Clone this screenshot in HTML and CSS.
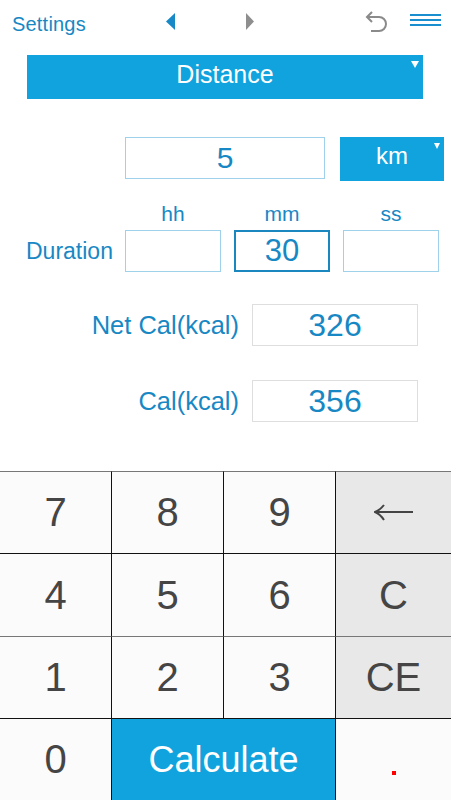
FILE: index.html
```html
<!DOCTYPE html>
<html>
<head>
<meta charset="utf-8">
<link rel="stylesheet" href="styles.css">
</head>
<body>
<div class="app">
  <div class="header">
    <span class="settings">Settings</span>
    <svg class="arrow-left" width="9" height="17" viewBox="0 0 9 17"><polygon points="9,0 9,17 0,8.5" fill="#1789c6"/></svg>
    <svg class="arrow-right" width="8" height="17" viewBox="0 0 8 17"><polygon points="0,0 0,17 8,8.5" fill="#8e8e8e"/></svg>
    <svg class="undo" width="26" height="24" viewBox="0 0 26 24"><path d="M3 7 H15 A7 7 0 0 1 15 21 H7" fill="none" stroke="#8a8a8a" stroke-width="2"/><path d="M8 2 L3 7 L8 12" fill="none" stroke="#8a8a8a" stroke-width="2"/></svg>
    <svg class="menu" width="31" height="14" viewBox="0 0 31 14"><rect x="0" y="1" width="31" height="2" fill="#1a8fcf"/><rect x="0" y="6" width="31" height="2" fill="#1a8fcf"/><rect x="0" y="11" width="31" height="2" fill="#1a8fcf"/></svg>
  </div>

  <div class="mode-bar">Distance<span class="tri"></span></div>

  <div class="dist-row">
    <div class="field dist-field">5</div>
    <div class="unit">km<span class="tri small"></span></div>
  </div>

  <div class="dur-grid">
    <span></span>
    <span class="unit-label">hh</span>
    <span class="unit-label">mm</span>
    <span class="unit-label">ss</span>
    <span class="dur-label">Duration</span>
    <div class="field dur-field"></div>
    <div class="field dur-field active">30</div>
    <div class="field dur-field"></div>
  </div>

  <div class="result-row first">
    <span class="result-label">Net Cal(kcal)</span>
    <div class="result-field">326</div>
  </div>
  <div class="result-row">
    <span class="result-label">Cal(kcal)</span>
    <div class="result-field">356</div>
  </div>

  <div class="keypad">
    <div class="key r1 c1">7</div>
    <div class="key r1">8</div>
    <div class="key r1">9</div>
    <div class="key r1 side"><svg width="40" height="18" viewBox="0 0 40 18"><path d="M1 8 H39" stroke="#444" stroke-width="2"/><path d="M10 1 Q6 6 1 8 Q6 10 10 16" fill="none" stroke="#444" stroke-width="2"/></svg></div>
    <div class="key c1">4</div>
    <div class="key">5</div>
    <div class="key">6</div>
    <div class="key side">C</div>
    <div class="key r3 c1">1</div>
    <div class="key r3">2</div>
    <div class="key r3">3</div>
    <div class="key r3 side">CE</div>
    <div class="key c1">0</div>
    <div class="key calc">Calculate</div>
    <div class="key dot-key"><span class="dot"></span></div>
  </div>
</div>
</body>
</html>
```

FILE: styles.css
```css
* { box-sizing: border-box; }
html, body { margin: 0; padding: 0; background: #fff; }
body { font-family: "Liberation Sans", Arial, sans-serif; color: #1788c4; }
.app { width: 451px; height: 800px; display: flex; flex-direction: column; overflow: hidden; }

.header { height: 44px; display: flex; align-items: flex-start; }
.settings { width: 166px; padding-left: 12px; margin-top: 12px; font-size: 20px; line-height: 24px; color: #1788c4; letter-spacing: 0.2px; }
.arrow-left { margin-top: 13px; }
.arrow-right { margin-top: 13px; margin-left: 71px; }
.undo { margin-top: 10px; margin-left: 110px; }
.menu { margin-top: 13px; margin-left: 20px; }

.mode-bar { position: relative; margin: 11px 0 0 27px; width: 396px; height: 44px; background: #10a3de; color: #fff; font-size: 25px; display: flex; align-items: center; justify-content: center; padding-bottom: 5px; }
.tri { position: absolute; right: 4px; top: 6px; width: 0; height: 0; border-left: 4px solid transparent; border-right: 4px solid transparent; border-top: 7px solid #fff; }
.tri.small { top: 6px; border-left-width: 3.5px; border-right-width: 3.5px; border-top-width: 6px; }

.dist-row { display: flex; margin-top: 38px; padding-left: 125px; align-items: flex-start; }
.field { border: 1px solid #9fd1ea; display: flex; align-items: center; justify-content: center; color: #1788c4; font-size: 30px; }
.dist-field { width: 200px; height: 42px; }
.unit { position: relative; margin-left: 15px; width: 104px; height: 44px; background: #10a3de; color: #fff; font-size: 24px; display: flex; align-items: center; justify-content: center; padding-bottom: 6px; }

.dur-grid { display: grid; grid-template-columns: 112px 96px 96px 96px; column-gap: 13px; row-gap: 4px; margin-top: 21px; align-items: center; }
.unit-label { text-align: center; font-size: 21px; line-height: 24px; }
.dur-label { font-size: 23px; padding-left: 26px; white-space: nowrap; }
.dur-field { height: 42px; font-size: 31px; }
.dur-field.active { border: 2px solid #1a87be; }

.result-row { display: grid; grid-template-columns: 252px 166px; align-items: center; margin-top: 34px; }
.result-row.first { margin-top: 32px; }
.result-label { text-align: right; padding-right: 13px; font-size: 25.5px; }
.result-field { height: 42px; border: 1px solid #dedede; display: flex; align-items: center; justify-content: center; font-size: 32px; color: #1788c4; }

.keypad { margin-top: auto; display: grid; grid-template-columns: 111px 112px 112px 116px; grid-template-rows: 82px 83px 82px 82px; }
.key { background: #fbfbfb; border-top: 1px solid #111; border-left: 1px solid #111; display: flex; align-items: center; justify-content: center; font-size: 40px; color: #454545; }
.key.c1 { border-left: none; }
.key.r1, .key.r3 { border-top: 1px solid #777; }
.key.side { background: #e8e8e8; }
.key.calc { grid-column: span 2; background: #10a3de; color: #fff; font-size: 36px; }
.dot { width: 4px; height: 4px; background: #f00; margin-top: 26px; }
```
